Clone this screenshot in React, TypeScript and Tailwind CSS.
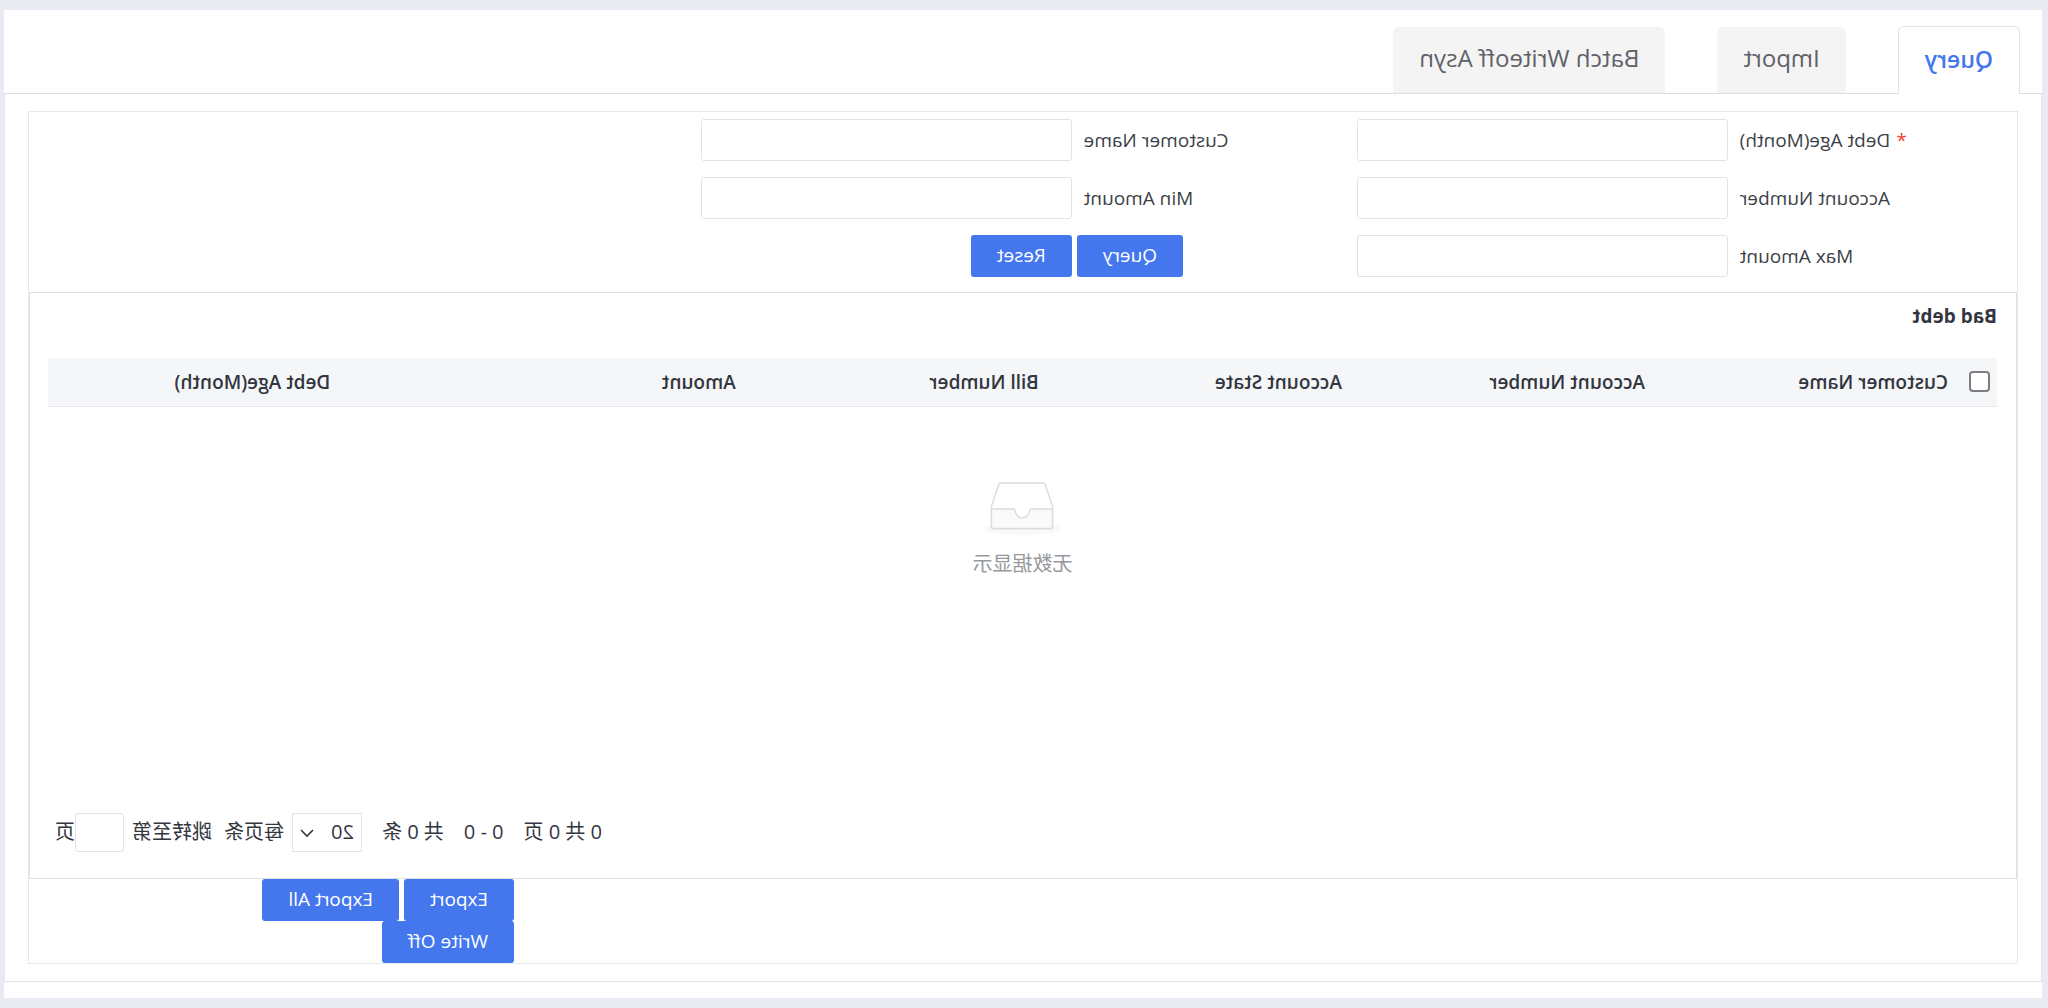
import React, { useId } from "react";

const tabs = ["Query", "Import", "Batch Writeoff Asyn"];

const columns = [
  { label: "Customer Name", width: "w-[15.55%]" },
  { label: "Account Number", width: "w-[15.55%]" },
  { label: "Account State", width: "w-[15.55%]" },
  { label: "Bill Number", width: "w-[15.55%]" },
  { label: "Amount", width: "w-[20.8%]" },
  { label: "Debt Age(Month)", width: "" },
];

function Button({ children }: { children: React.ReactNode }) {
  return (
    <button
      type="button"
      className="h-[42px] whitespace-nowrap rounded-[3px] bg-[#4477ee] px-[26px] pb-0.5 text-[19px] leading-6 text-white"
    >
      {children}
    </button>
  );
}

function Field({ label, required }: { label: string; required?: boolean }) {
  const id = useId();
  return (
    <div className="flex items-center">
      <label htmlFor={id} className="w-[43.5%] pr-3 text-right">
        {required && <span className="mr-1.5 text-[#f0402c]">*</span>}
        {label}
      </label>
      <input
        id={id}
        type="text"
        className="h-[42px] min-w-0 flex-1 rounded-[3px] border border-[#e2e3e8] bg-white px-3 outline-none"
      />
    </div>
  );
}

function EmptyIcon() {
  return (
    <svg width="80" height="54" viewBox="0 0 80 54" fill="none" aria-hidden="true">
      <ellipse cx="40" cy="46.5" rx="39" ry="6.5" fill="#f9f9f9" />
      <path
        d="M18.2 1h43.6q1 0 1.3 1L70.500 24v21.500q0 1-1 1H10.500q-1 0-1-1V24L16.900 2q.3-1 1.300-1z"
        fill="#fff"
        stroke="#dcdcdc"
        strokeWidth="1.4"
      />
      <path
        d="M9.500 27H31q1 0 1.200 1.200C33 33 35.500 35.800 39.600 35.800S46.300 33 47 28.200Q47.200 27 48.200 27h22.300v18.500q0 1-1 1h-59q-1 0-1-1z"
        fill="#fafafa"
        stroke="#dcdcdc"
        strokeWidth="1.4"
      />
    </svg>
  );
}

export default function App() {
  return (
    <div
      className="min-h-screen -scale-x-100 bg-[#eaebf2] pt-2.5 pr-1 pb-[11px] pl-1.5 text-[19px] leading-6 text-[#3c3f47]"
      style={{ fontFamily: '"Open Sans", "Noto Sans CJK SC", sans-serif' }}
    >
      <main className="bg-white pb-4">
        <nav className="flex items-end gap-[52px] border-b border-[#dcdde2] pt-4 pl-[22px]">
          {tabs.map((tab, i) => (
            <button
              key={tab}
              type="button"
              className={
                i === 0
                  ? "-mb-px h-[68px] rounded-t-md border border-b-0 border-[#e2e3e8] bg-white px-[26px] pb-1 text-[23px] font-semibold text-[#4477ee]"
                  : "h-[66px] rounded-t-md bg-[#f4f4f4] px-[26px] pb-1 text-[24px] text-[#5f6168]"
              }
            >
              {tab}
            </button>
          ))}
        </nav>

        <div className="border border-t-0 border-[#e4e5ea] px-[23px] pt-[17px] pb-[17px]">
          <div className="border border-[#e8e8ec]">
            <form className="grid grid-cols-3 gap-y-4 pt-[7px] pr-4 pb-[15px] pl-1">
              <Field label="Debt Age(Month)" required />
              <Field label="Customer Name" />
              <span />
              <Field label="Account Number" />
              <Field label="Min Amount" />
              <span />
              <Field label="Max Amount" />
              <div className="flex items-center">
                <div className="flex w-[43.5%] justify-end pr-[5px]">
                  <Button>Query</Button>
                </div>
                <Button>Reset</Button>
              </div>
            </form>

            <section className="border border-[#dfe0e5] pr-[18px] pb-[26px] pl-[19px] text-[#33363f]">
              <h2 className="pt-[11px] pb-[30px] font-bold">Bad debt</h2>
              <table className="w-full table-fixed border-b border-[#e6e7ea] bg-[#f4f6f8] text-left">
                <thead>
                  <tr className="h-12">
                    <th className="w-10 pl-[7px]">
                      <input
                        type="checkbox"
                        aria-label="Select all"
                        className="block size-[21px] appearance-none rounded-[4px] border-2 border-[#7b7d82] bg-white"
                      />
                    </th>
                    {columns.map((c) => (
                      <th key={c.label} className={`${c.width} pl-[9px] font-semibold`}>
                        {c.label}
                      </th>
                    ))}
                  </tr>
                </thead>
              </table>
              <div className="flex h-[406px] flex-col items-center pt-[75px] text-[20px] text-[#97999e]">
                <EmptyIcon />
                <p className="pt-3.5 leading-7">无数据显示</p>
              </div>
              <div className="flex h-[39px] items-center justify-end pr-[7px] text-[20px]">
                <span className="mr-5">0 共 0 页</span>
                <span className="mr-5">0 - 0</span>
                <span className="mr-5">共 0 条</span>
                <label className="flex items-center">
                  <span className="relative mr-2">
                    <select className="block h-[39px] w-[70px] appearance-none border border-[#e2e3e8] bg-white pl-[7px] text-[20px] outline-none">
                      <option>20</option>
                    </select>
                    <svg
                      className="pointer-events-none absolute top-4 right-2"
                      width="14"
                      height="9"
                      viewBox="0 0 14 9"
                      fill="none"
                      stroke="#33363d"
                      strokeWidth="1.6"
                      aria-hidden="true"
                    >
                      <path d="M1 1l6 6 6-6" />
                    </svg>
                  </span>
                  每页条
                </label>
                <label className="ml-3 flex items-center">
                  跳转至第
                  <input
                    type="text"
                    className="ml-2 h-[39px] w-[49px] rounded-[3px] border border-[#e2e3e8] bg-white px-1 outline-none"
                  />
                  页
                </label>
              </div>
            </section>

            <div className="ml-[75.6%] flex w-64 flex-wrap gap-x-[5px]">
              <Button>Export</Button>
              <Button>Export All</Button>
              <Button>Write Off</Button>
            </div>
          </div>
        </div>
      </main>
    </div>
  );
}
